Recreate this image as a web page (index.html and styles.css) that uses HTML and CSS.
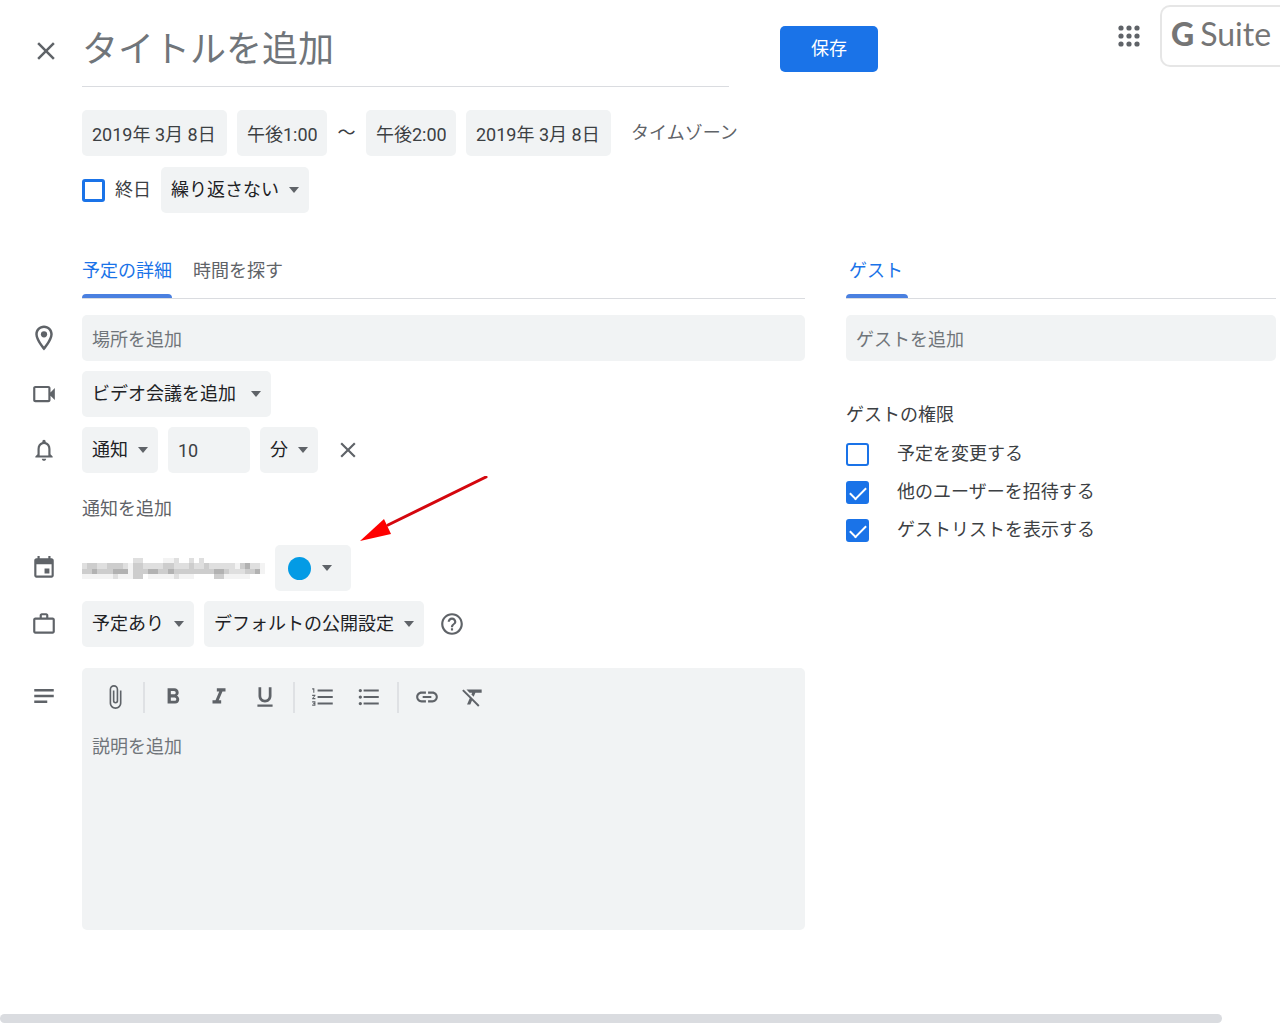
FILE: index.html
```html
<!DOCTYPE html>
<html lang="ja">
<head>
<meta charset="utf-8">
<meta name="viewport" content="width=device-width, initial-scale=1">
<title>予定を追加</title>
<link rel="stylesheet" href="styles.css">
</head>
<body>
<form class="page">
  <header class="header">
    <button type="button" class="icon-button close" aria-label="閉じる">
      <svg class="icon icon-large" viewBox="0 0 24 24"><path d="M19 6.41 17.59 5 12 10.59 6.41 5 5 6.41 10.59 12 5 17.59 6.41 19 12 13.41 17.59 19 19 17.59 13.41 12z"/></svg>
    </button>
    <input class="title" type="text" placeholder="タイトルを追加" aria-label="タイトルを追加">
    <button type="button" class="save">保存</button>
    <button type="button" class="icon-button apps" aria-label="アプリ">
      <svg class="apps-icon" viewBox="0 0 22 22"><circle cx="3" cy="3" r="2.6"/><circle cx="11" cy="3" r="2.6"/><circle cx="19" cy="3" r="2.6"/><circle cx="3" cy="11" r="2.6"/><circle cx="11" cy="11" r="2.6"/><circle cx="19" cy="11" r="2.6"/><circle cx="3" cy="19" r="2.6"/><circle cx="11" cy="19" r="2.6"/><circle cx="19" cy="19" r="2.6"/></svg>
    </button>
    <div class="brand"><b>G</b><span>Suite</span></div>
  </header>

  <section class="when">
    <div class="row">
      <input class="field date" type="text" value="2019年 3月 8日" aria-label="開始日">
      <input class="field time" type="text" value="午後1:00" aria-label="開始時刻">
      <span class="tilde">～</span>
      <input class="field time" type="text" value="午後2:00" aria-label="終了時刻">
      <input class="field date" type="text" value="2019年 3月 8日" aria-label="終了日">
      <button type="button" class="text-button timezone">タイムゾーン</button>
    </div>
    <div class="row">
      <label class="all-day"><input class="check" type="checkbox">終日</label>
      <span class="dropdown"><select aria-label="繰り返し"><option>繰り返さない</option></select></span>
    </div>
  </section>

  <div class="columns">
    <main class="details">
      <nav class="tabs indent">
        <a class="tab active" href="#details">予定の詳細</a>
        <a class="tab" href="#find">時間を探す</a>
      </nav>

      <div class="line">
        <svg class="icon icon-large" viewBox="0 0 24 24"><path d="M12 2C8.13 2 5 5.13 5 9c0 5.25 7 13 7 13s7-7.75 7-13c0-3.87-3.13-7-7-7zM7 9c0-2.76 2.24-5 5-5s5 2.24 5 5c0 2.88-2.88 7.19-5 9.88C9.92 16.21 7 11.85 7 9z"/><circle cx="12" cy="9" r="2.5"/></svg>
        <input class="field wide" type="text" placeholder="場所を追加" aria-label="場所を追加">
      </div>

      <div class="line">
        <svg class="icon" viewBox="0 0 24 24"><path d="M4 4.5c-1 0-2 .8-2 1.800v11.400c0 1 1 1.800 2 1.800h12c1 0 2-.8 2-1.800v-4.200l4 4V6.500l-4 4V6.300c0-1-1-1.800-2-1.800zm0 2h12v11H4z"/></svg>
        <span class="dropdown dropdown-video"><select aria-label="ビデオ会議"><option>ビデオ会議を追加</option></select></span>
      </div>

      <div class="line">
        <svg class="icon" viewBox="0 0 24 24"><path d="M12 22c1.1 0 2-.9 2-2h-4c0 1.1.9 2 2 2zm6-6v-5c0-3.07-1.63-5.64-4.5-6.32V4c0-.83-.67-1.5-1.5-1.5s-1.5.67-1.5 1.5v.68C7.64 5.36 6 7.92 6 11v5l-2 2v1h16v-1l-2-2zm-2 1H8v-6c0-2.48 1.51-4.5 4-4.5s4 2.02 4 4.5v6z"/></svg>
        <div class="row">
          <span class="dropdown"><select aria-label="通知方法"><option>通知</option></select></span>
          <input class="field amount" type="text" value="10" aria-label="通知までの時間">
          <span class="dropdown"><select aria-label="単位"><option>分</option></select></span>
          <button type="button" class="icon-button remove" aria-label="通知を削除">
            <svg class="icon" viewBox="0 0 24 24"><path d="M19 6.41 17.59 5 12 10.59 6.41 5 5 6.41 10.59 12 5 17.59 6.41 19 12 13.41 17.59 19 19 17.59 13.41 12z"/></svg>
          </button>
        </div>
      </div>

      <div class="add-notice indent"><button type="button" class="text-button">通知を追加</button></div>

      <div class="line">
        <svg class="icon" viewBox="0 0 24 24"><path d="M17 12.500h-4.500V17H17zM16 1v2H8V1H6v2H5c-1.110 0-2 .9-2 2v14c0 1.100.89 2 2 2h14c1.100 0 2-.9 2-2V5c0-1.100-.9-2-2-2h-1V1h-2zm3 18H5V8.500h14z"/></svg>
        <div class="row owner">
          <svg class="mosaic" viewBox="0 0 36 4" preserveAspectRatio="none" shape-rendering="crispEdges" role="img" aria-label="非公開のアドレス">
            <path fill="#f3f3f3" d="M0 3h6v1H0zM7 3h3v1H7zM13 3h9v1h-9zM16 0h2v1h-2zM28 3h5v1h-5zM30 1h1v1h-1zM35 1h1v2h-1zM9 1h1v2H9z"/>
            <path fill="#dfdfdf" d="M0 1h9v1H0zM10 0h2v1h-2zM12 1h18v1H12zM18 0h1v1h-1zM21 0h1v1h-1zM23 0h1v1h-1zM31 1h4v1h-4zM6 3h1v1H6zM18 3h1v1h-1zM29 2h3v1h-3z"/>
            <path fill="#cdcdcd" d="M0 2h6v1H0zM1 1h2v1H1zM10 1h2v3h-2zM12 2h17v1H12zM5 1h3v1H5zM16 1h2v1h-2zM21 1h1v1h-1zM24 1h1v1h-1zM26 3h2v1h-2zM31 1h2v1h-2zM32 2h3v1h-3z"/>
            <path fill="#b2b2b2" d="M2 2h1v1H2zM6 2h3v1H6zM13 2h2v1h-2zM17 2h1v1h-1zM26 2h2v1h-2zM32 1h1v1h-1zM34 2h1v1h-1z"/>
          </svg>
          <button type="button" class="color" aria-label="予定の色"><span class="swatch"></span><span class="caret"></span></button>
          <svg class="pointer" viewBox="0 0 128 68"><path d="M126 1 28 49" stroke="#d4070e" stroke-width="3" stroke-linecap="round"/><path d="M0 65 24 43 31 58z" fill="#fe0000"/></svg>
        </div>
      </div>

      <div class="line">
        <svg class="icon" viewBox="0 0 24 24"><path d="M14 6V4h-4v2zM4 8v11h16V8zm16-2c1.11 0 2 .89 2 2v11c0 1.11-.89 2-2 2H4c-1.11 0-2-.89-2-2V8c0-1.11.89-2 2-2h4V4c0-1.11.89-2 2-2h4c1.11 0 2 .89 2 2v2z"/></svg>
        <div class="row">
          <span class="dropdown"><select aria-label="予定の有無"><option>予定あり</option></select></span>
          <span class="dropdown"><select aria-label="公開設定"><option>デフォルトの公開設定</option></select></span>
          <button type="button" class="icon-button help" aria-label="ヘルプ">
            <svg class="icon" viewBox="0 0 24 24"><path d="M11 18h2v-2h-2zm1-16C6.48 2 2 6.48 2 12s4.48 10 10 10 10-4.48 10-10S17.52 2 12 2zm0 18c-4.41 0-8-3.59-8-8s3.59-8 8-8 8 3.59 8 8-3.59 8-8 8zm0-14c-2.21 0-4 1.79-4 4h2c0-1.1.9-2 2-2s2 .9 2 2c0 2-3 1.75-3 5h2c0-2.25 3-2.5 3-5 0-2.21-1.79-4-4-4z"/></svg>
          </button>
        </div>
      </div>

      <div class="line line-description">
        <svg class="icon" viewBox="0 0 24 24"><path d="M3 5.500h18v2.400H3zM3 10.800h18v2.400H3zM3 16.100h12v2.400H3z"/></svg>
        <div class="editor">
          <div class="toolbar">
            <button type="button" class="tool" aria-label="添付"><svg class="icon" viewBox="0 0 24 24"><path d="M16.5 6v11.5c0 2.21-1.79 4-4 4s-4-1.79-4-4V5a2.5 2.5 0 0 1 5 0v10.500c0 .55-.45 1-1 1s-1-.45-1-1V6H10v9.500a2.500 2.500 0 0 0 5 0V5c0-2.210-1.790-4-4-4S7 2.790 7 5v12.500c0 3.040 2.460 5.500 5.500 5.500s5.500-2.460 5.500-5.500V6z"/></svg></button>
            <span class="separator"></span>
            <button type="button" class="tool" aria-label="太字"><svg class="icon" viewBox="0 0 24 24"><path d="M15.6 10.79c.97-.67 1.65-1.77 1.65-2.79 0-2.26-1.75-4-4-4H7v14h7.04c2.09 0 3.71-1.7 3.71-3.79 0-1.52-.86-2.82-2.15-3.42zM10 6.5h3c.83 0 1.5.67 1.5 1.5s-.67 1.5-1.5 1.5h-3zm3.5 9H10v-3h3.5c.83 0 1.5.67 1.5 1.5s-.67 1.5-1.5 1.5z"/></svg></button>
            <button type="button" class="tool" aria-label="斜体"><svg class="icon" viewBox="0 0 24 24"><path d="M10 4v3h2.210l-3.420 8H6v3h8v-3h-2.210l3.420-8H18V4z"/></svg></button>
            <button type="button" class="tool" aria-label="下線"><svg class="icon" viewBox="0 0 24 24"><path d="M12 17c3.310 0 6-2.690 6-6V3h-2.500v8c0 1.930-1.570 3.500-3.500 3.500S8.500 12.930 8.500 11V3H6v8c0 3.310 2.690 6 6 6zm-7 2v2h14v-2z"/></svg></button>
            <span class="separator"></span>
            <button type="button" class="tool" aria-label="番号付きリスト"><svg class="icon" viewBox="0 0 24 24"><path d="M2 17h2v.5H3v1h1v.5H2v1h3v-4H2zm1-9h1V4H2v1h1zm-1 3h1.800L2 13.100v.9h3v-1H3.200L5 10.900V10H2zm5-6v2h14V5zm0 14h14v-2H7zm0-6h14v-2H7z"/></svg></button>
            <button type="button" class="tool" aria-label="箇条書き"><svg class="icon" viewBox="0 0 24 24"><path d="M4 10.500c-.83 0-1.500.67-1.500 1.500s.67 1.500 1.500 1.500 1.500-.67 1.500-1.500-.67-1.500-1.500-1.500zm0-6c-.83 0-1.500.67-1.500 1.500S3.170 7.500 4 7.500 5.500 6.830 5.500 6 4.830 4.500 4 4.500zm0 12c-.83 0-1.500.68-1.500 1.500s.68 1.500 1.500 1.500 1.500-.68 1.500-1.500-.67-1.500-1.500-1.500zM7 19h14v-2H7zm0-6h14v-2H7zm0-8v2h14V5z"/></svg></button>
            <span class="separator"></span>
            <button type="button" class="tool" aria-label="リンク"><svg class="icon" viewBox="0 0 24 24"><path d="M3.9 12c0-1.71 1.39-3.1 3.1-3.1h4V7H7c-2.76 0-5 2.24-5 5s2.24 5 5 5h4v-1.900H7c-1.710 0-3.100-1.390-3.100-3.100zM8 13h8v-2H8zm9-6h-4v1.900h4c1.710 0 3.100 1.390 3.100 3.100s-1.390 3.100-3.100 3.100h-4V17h4c2.760 0 5-2.240 5-5s-2.240-5-5-5z"/></svg></button>
            <button type="button" class="tool" aria-label="書式をクリア"><svg class="icon" viewBox="0 0 24 24"><path d="M3.270 5 2 6.270l6.970 6.970L6.500 19h3l1.570-3.660L16.730 21 18 19.730 3.550 5.270zM6 5v.18L8.820 8h2.400l-.72 1.680 2.100 2.100L14.210 8H20V5z"/></svg></button>
          </div>
          <textarea class="description" placeholder="説明を追加" aria-label="説明を追加"></textarea>
        </div>
      </div>
    </main>

    <aside class="guests">
      <nav class="tabs"><a class="tab tab-guest active" href="#guests">ゲスト</a></nav>
      <input class="field wide" type="text" placeholder="ゲストを追加" aria-label="ゲストを追加">
      <fieldset class="permissions">
        <legend>ゲストの権限</legend>
        <label><input class="check" type="checkbox">予定を変更する</label>
        <label><input class="check" type="checkbox" checked>他のユーザーを招待する</label>
        <label><input class="check" type="checkbox" checked>ゲストリストを表示する</label>
      </fieldset>
    </aside>
  </div>

  <div class="scroll-thumb"></div>
</form>
</body>
</html>
```
FILE: styles.css
```css
* { box-sizing: border-box; }

body {
  margin: 0;
  background: #fff;
  color: #3c4043;
  font: 18px/24px Roboto, "Noto Sans CJK JP", sans-serif;
  overflow-x: hidden;
}

button, input, select, textarea {
  margin: 0;
  padding: 0;
  border: 0;
  background: none;
  color: inherit;
  font: inherit;
}

::placeholder { color: #70757a; opacity: 1; }

.page {
  display: flex;
  flex-direction: column;
  min-height: 100vh;
}

.icon { flex: none; display: block; width: 26px; height: 26px; fill: #5f6368; }
.icon-large { width: 30px; height: 30px; }
.icon-button { display: flex; align-items: center; justify-content: center; }

/* Header */
.header { display: flex; align-items: flex-start; padding-top: 5px; }
.close { width: 82px; height: 91px; padding-left: 10px; }
.title {
  flex: 1;
  min-width: 0;
  height: 82px;
  padding-top: 8px;
  border-bottom: 1px solid #dadce0;
  font-size: 36px;
  line-height: 48px;
}
.save {
  width: 98px;
  height: 46px;
  margin: 21px 236px 0 51px;
  border-radius: 5px;
  background: #1a73e8;
  color: #fff;
}
.apps { width: 30px; height: 62px; }
.apps-icon { width: 22px; height: 22px; fill: #5f6368; }
.brand {
  display: flex;
  align-items: center;
  gap: 6px;
  width: 120px;
  height: 62px;
  margin-left: 16px;
  padding: 0 0 4px 9px;
  border: 2px solid #e6e6e6;
  border-right: 0;
  border-radius: 10px 0 0 10px;
  color: #757575;
  font: 32px/40px Lato, sans-serif;
}
.brand b { font-weight: 900; }

/* Shared controls */
.row { display: flex; align-items: center; gap: 10px; }
.field { height: 46px; padding: 0 10px; border-radius: 5px; background: #f1f3f4; }
.wide { flex: 1; width: 100%; min-width: 0; padding-top: 2px; }
.dropdown {
  display: grid;
  align-items: center;
  border-radius: 5px;
  background: #f1f3f4;
  color: #202124;
}
.dropdown select {
  grid-area: 1 / 1;
  appearance: none;
  height: 46px;
  padding: 0 30px 0 10px;
}
.dropdown-video select { padding-right: 35px; }
.dropdown::after, .caret {
  content: "";
  width: 0;
  border: 5px solid transparent;
  border-top: 6px solid #5f6368;
  border-bottom: 0;
}
.dropdown::after { grid-area: 1 / 1; justify-self: end; margin-right: 10px; pointer-events: none; }
.text-button { color: #5f6368; }
.check {
  flex: none;
  appearance: none;
  display: grid;
  place-items: center;
  width: 23px;
  height: 23px;
  border: 2px solid #1a73e8;
  border-radius: 3px;
}
.check:checked { background: #1a73e8; }
.check:checked::after {
  content: "";
  width: 14px;
  height: 7px;
  border: solid #fff;
  border-width: 0 0 2px 2px;
  transform: translateY(-1px) rotate(-45deg);
}

/* Date and time */
.when { display: flex; flex-direction: column; gap: 11px; padding: 14px 0 0 82px; }
.date { width: 145px; }
.time { width: 90px; }
.tilde { width: 19px; text-align: center; }
.timezone { margin-left: 10px; }
.all-day { display: flex; align-items: center; gap: 10px; }
.all-day .check { border-width: 3px; }

/* Columns */
.columns {
  display: grid;
  grid-template-columns: minmax(0, 1fr) 430px;
  gap: 41px;
  padding: 43px 4px 0 0;
}
.details { display: flex; flex-direction: column; gap: 10px; }
.indent { margin-left: 82px; }
.tabs {
  display: flex;
  gap: 21px;
  height: 43px;
  margin-bottom: 6px;
  border-bottom: 1px solid #dadce0;
}
.tab { height: 42px; padding-top: 3px; color: #5f6368; text-decoration: none; }
.tab.active { position: relative; color: #1a73e8; }
.tab.active::after {
  content: "";
  position: absolute;
  inset: auto 0 0;
  height: 4px;
  border-radius: 4px 4px 0 0;
  background: #4a80e0;
}
.tab-guest { padding: 3px 5px 0 3px; }
.line { display: flex; align-items: center; }
.line > .icon { margin: 0 25px 0 31px; }
.line > .icon-large { margin: 0 23px 0 29px; }
.amount { width: 82px; }
.remove { width: 40px; height: 46px; }
.help { width: 36px; height: 46px; }
.add-notice { display: flex; align-items: center; height: 52px; }

/* Calendar owner and colour */
.owner { position: relative; }
.mosaic { width: 183px; height: 21px; }
.color {
  display: flex;
  align-items: center;
  gap: 11px;
  width: 76px;
  height: 46px;
  padding-left: 13px;
  border-radius: 5px;
  background: #f1f3f4;
}
.swatch { width: 23px; height: 23px; border-radius: 50%; background: #039be5; }
.pointer { position: absolute; left: 278px; top: -69px; width: 128px; height: 68px; fill: none; }

/* Description */
.line-description { align-items: flex-start; margin-top: 11px; }
.line-description > .icon { margin-top: 15px; }
.editor { flex: 1; min-width: 0; border-radius: 5px; background: #f1f3f4; }
.toolbar { display: flex; align-items: center; height: 58px; padding-left: 10px; }
.tool { display: grid; place-items: center; width: 46px; height: 46px; }
.separator { width: 2px; height: 31px; margin: 0 5px; background: #dfe1e4; }
.description { display: block; width: 100%; height: 204px; padding: 9px 10px; resize: none; }

/* Guests */
.guests { display: flex; flex-direction: column; gap: 10px; }
.guests .wide { flex: none; }
.permissions {
  display: flex;
  flex-direction: column;
  gap: 14px;
  margin: 32px 0 0;
  padding: 0;
  border: 0;
}
.permissions legend { margin-bottom: 15px; padding: 0; color: #3c4043; }
.permissions label { display: flex; align-items: center; gap: 28px; }

.scroll-thumb {
  width: calc(100% - 58px);
  height: 9px;
  margin: auto 0 1px;
  border-radius: 5px;
  background: #dadce0;
}
```
